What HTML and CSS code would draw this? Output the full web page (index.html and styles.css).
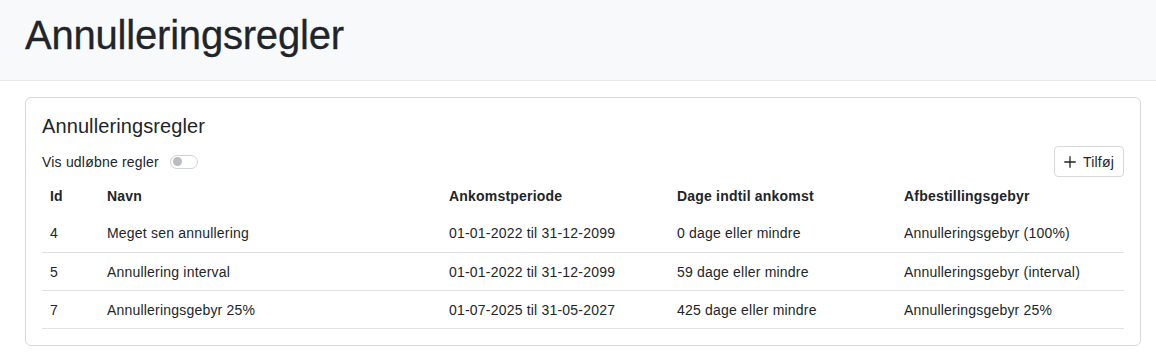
FILE: index.html
```html
<!DOCTYPE html>
<html lang="da">
<head>
<meta charset="utf-8">
<title>Annulleringsregler</title>
<link rel="stylesheet" href="styles.css">
</head>
<body>
<header class="page-header">
  <h1 class="page-title">Annulleringsregler</h1>
</header>
<main class="content">
  <section class="card">
    <h2 class="card-title">Annulleringsregler</h2>
    <div class="toolbar">
      <label class="toggle-label">
        <span>Vis udløbne regler</span>
        <span class="switch"><span class="knob"></span></span>
      </label>
      <button class="btn" type="button">
        <svg class="btn-icon" viewBox="0 0 16 16" width="14" height="14"><path d="M8 2v12M2 8h12" stroke="#212529" stroke-width="1.5" stroke-linecap="round" fill="none"/></svg>
        <span>Tilføj</span>
      </button>
    </div>
    <table class="table">
      <colgroup>
        <col class="c-id"><col class="c-name"><col class="c-period"><col class="c-days"><col class="c-fee">
      </colgroup>
      <thead>
        <tr><th>Id</th><th>Navn</th><th>Ankomstperiode</th><th>Dage indtil ankomst</th><th>Afbestillingsgebyr</th></tr>
      </thead>
      <tbody>
        <tr><td>4</td><td>Meget sen annullering</td><td>01-01-2022 til 31-12-2099</td><td>0 dage eller mindre</td><td>Annulleringsgebyr (100%)</td></tr>
        <tr><td>5</td><td>Annullering interval</td><td>01-01-2022 til 31-12-2099</td><td>59 dage eller mindre</td><td>Annulleringsgebyr (interval)</td></tr>
        <tr><td>7</td><td>Annulleringsgebyr 25%</td><td>01-07-2025 til 31-05-2027</td><td>425 dage eller mindre</td><td>Annulleringsgebyr 25%</td></tr>
      </tbody>
    </table>
  </section>
</main>
</body>
</html>
```
FILE: styles.css
```css
* { box-sizing: border-box; }
html, body { margin: 0; padding: 0; }
body {
  font-family: "Liberation Sans", Arial, sans-serif;
  font-size: 14px;
  letter-spacing: 0.2px;
  color: #212529;
  background: #fff;
  width: 1156px;
}
.page-header {
  background: #f8f9fa;
  border-bottom: 1px solid #e6e7e9;
  height: 81px;
  padding: 11px 25px 0;
}
.page-title {
  margin: 0;
  font-size: 40px;
  line-height: 48px;
  font-weight: 500;
  letter-spacing: -0.2px;
  -webkit-text-stroke: 0.3px #212529;
}
.content {
  padding: 16px 16px 0 25px;
}
.card {
  border: 1px solid #d6d8db;
  border-radius: 6px;
  padding: 16px 16px 16px;
  width: 1116px;
}
.card-title {
  margin: 0 0 8px;
  font-size: 20px;
  line-height: 24px;
  font-weight: 400;
  letter-spacing: 0.1px;
}
.toolbar {
  display: flex;
  align-items: center;
  justify-content: space-between;
  height: 31px;
}
.toggle-label {
  display: flex;
  align-items: center;
  gap: 11px;
  line-height: 20px;
}
.switch {
  display: inline-flex;
  align-items: center;
  width: 28px;
  height: 14px;
  border: 1px solid #cfd3d7;
  border-radius: 7px;
  padding-left: 2px;
  background: #fff;
}
.knob {
  width: 9px;
  height: 9px;
  border-radius: 50%;
  background: #b9bdc2;
}
.btn {
  display: inline-flex;
  align-items: center;
  gap: 6px;
  height: 31px;
  padding: 0 9px 0 8px;
  font-family: inherit;
  font-size: 14px;
  letter-spacing: 0.2px;
  color: #212529;
  background: #fff;
  border: 1px solid #d6d8db;
  border-radius: 4px;
}
.btn-icon { display: block; }
.table {
  width: 100%;
  border-collapse: collapse;
}
.c-id { width: 57px; }
.c-name { width: 342px; }
.c-period { width: 228px; }
.c-days { width: 227px; }
.c-fee { width: 228px; }
.table th, .table td {
  text-align: left;
  padding: 0 8px;
  vertical-align: middle;
  line-height: 20px;
}
.table th { font-weight: 700; height: 37.5px; }
.table td { height: 38px; }
.table tbody td { border-bottom: 1px solid #dee2e6; }
```
